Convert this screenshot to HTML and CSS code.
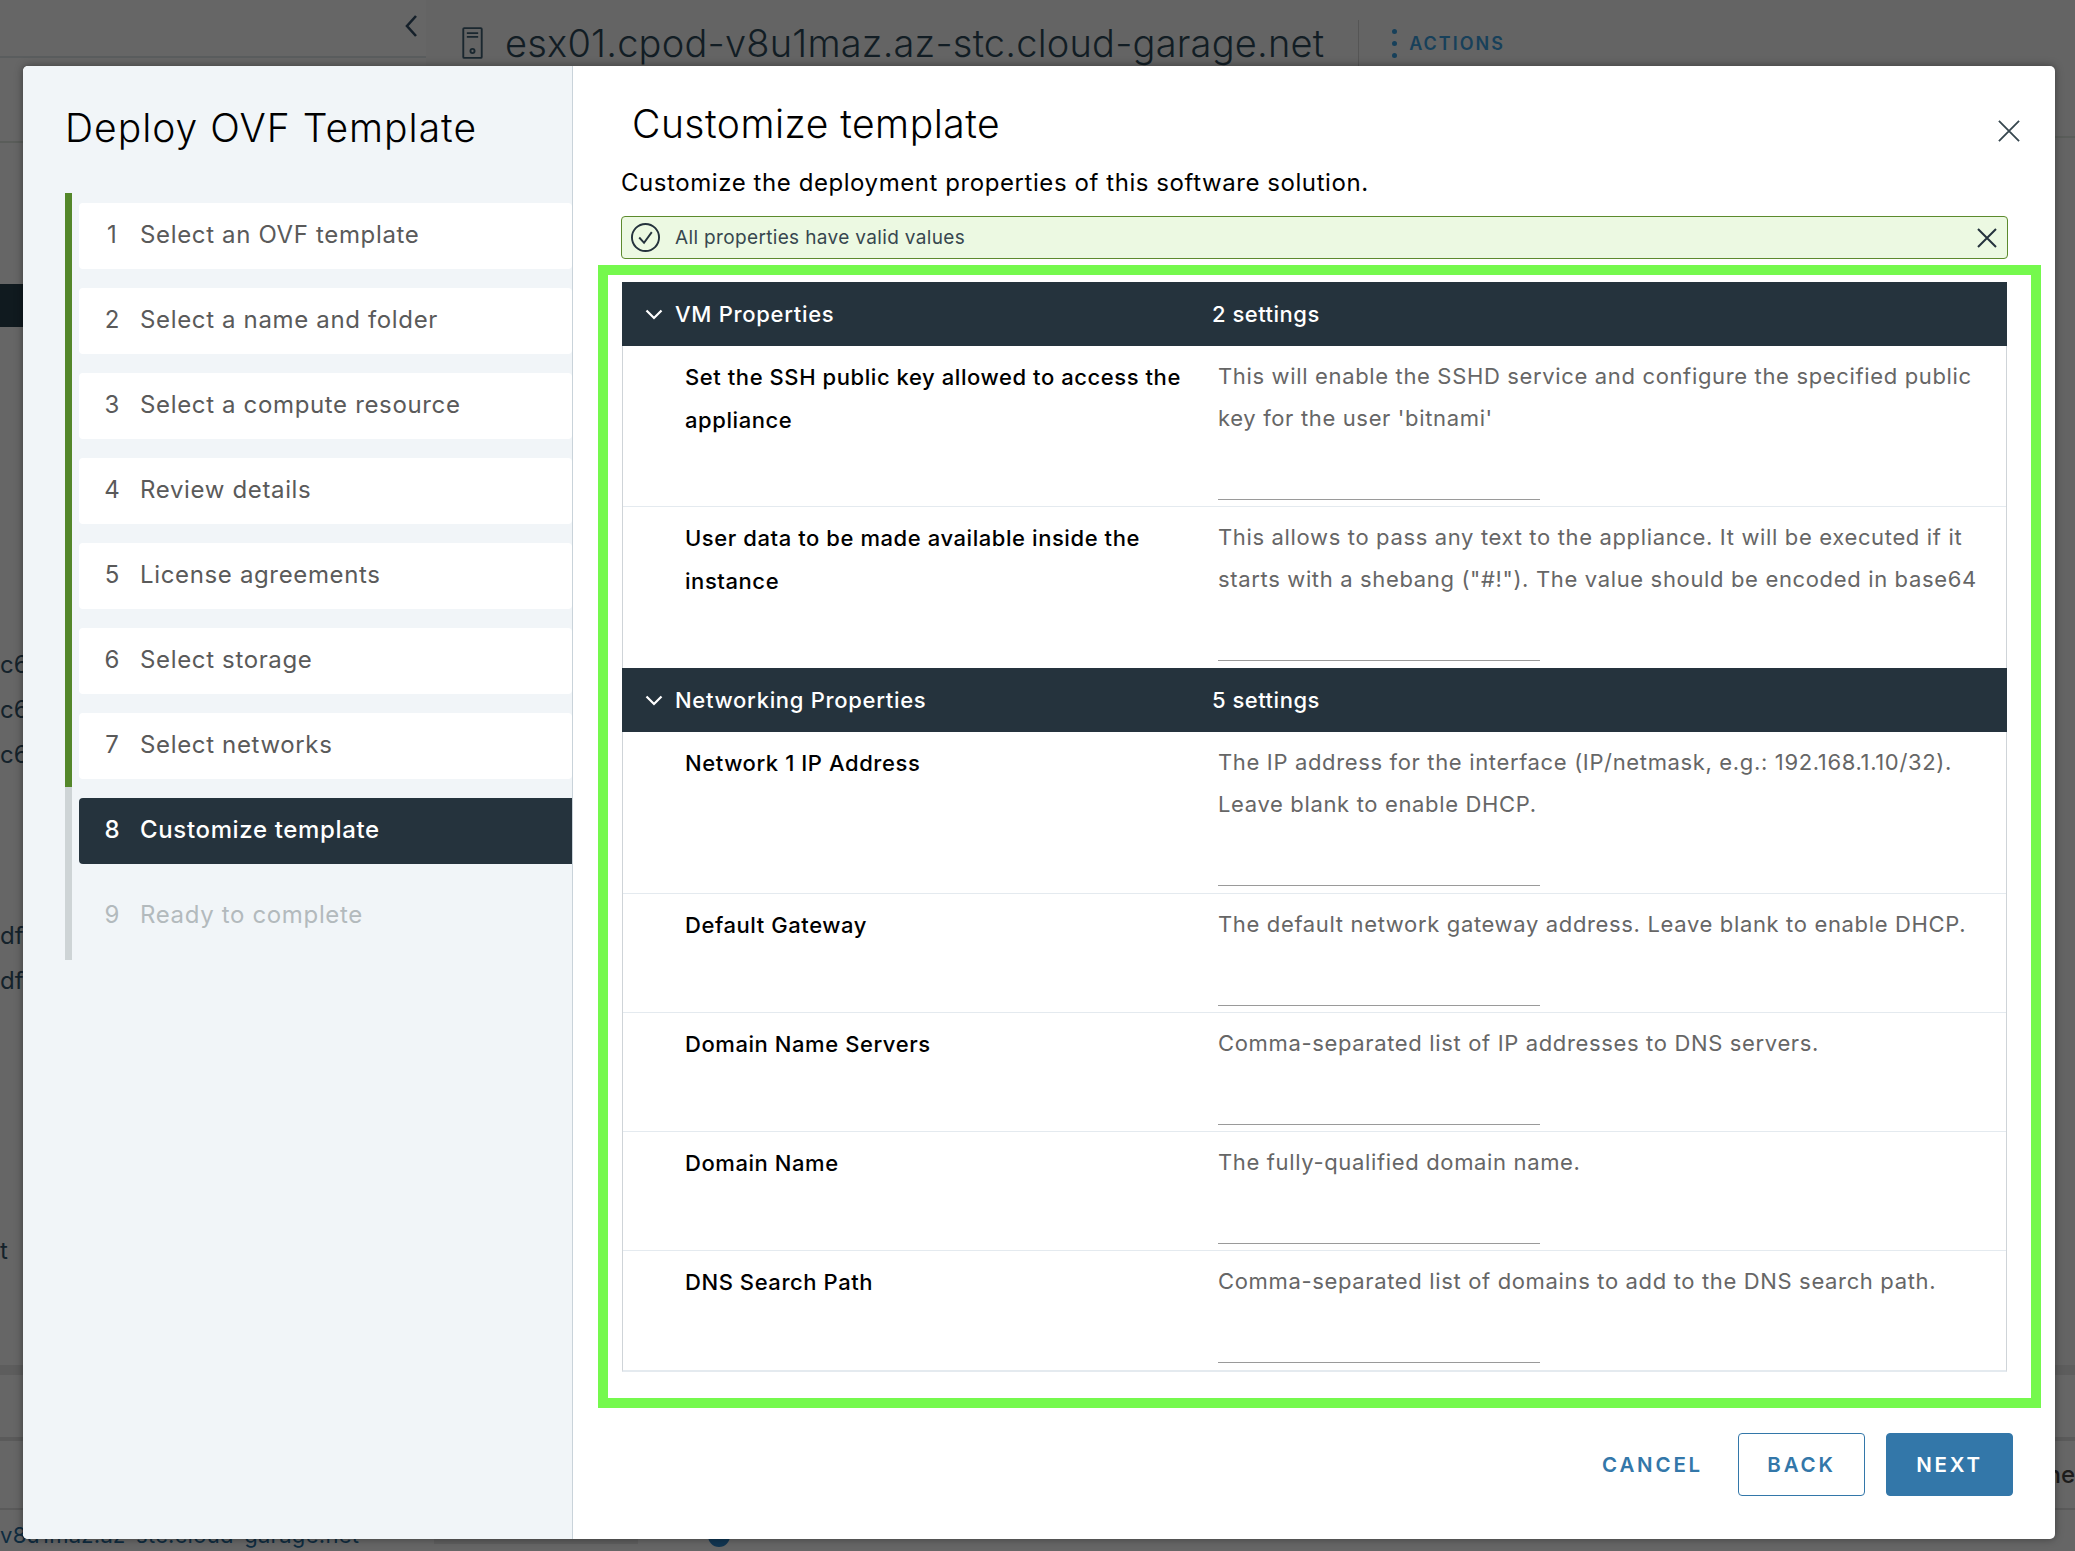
FILE: index.html
```html
<!DOCTYPE html>
<html lang="en">
<head>
<meta charset="utf-8">
<title>Deploy OVF Template</title>
<link rel="stylesheet" href="styles.css">
</head>
<body>
<div class="backdrop">
  <aside class="nav">
    <div class="nav-top">
      <svg class="nav-chevron" viewBox="0 0 16 24"><path d="M13 2 L4 12 L13 22"/></svg>
    </div>
    <div class="nav-sub"></div>
    <div class="nav-selected"></div>
    <div class="nav-list nav-list-a"><div>c6</div><div>c6</div><div>c6</div></div>
    <div class="nav-list nav-list-b"><div>df</div><div>df</div></div>
    <div class="nav-list nav-list-c"><div>t</div></div>
  </aside>
  <main class="main">
    <header class="main-head">
      <svg class="host-icon" viewBox="0 0 22 34"><rect x="1.2" y="1.2" width="19.6" height="31.6" rx="1"/><path d="M5 6.5 H17 M5 10.5 H17"/><circle cx="11" cy="25.5" r="2.2"/></svg>
      <h1 class="host-name">esx01.cpod-v8u1maz.az-stc.cloud-garage.net</h1>
      <span class="head-sep"></span>
      <span class="kebab"><i></i><i></i><i></i></span>
      <span class="actions">ACTIONS</span>
    </header>
    <div class="main-sub"></div>
  </main>
  <div class="band band-grey"></div>
  <div class="band band-line-a"><span class="band-tail">ne</span></div>
  <div class="band-foot">
    <span class="foot-link">v8u1maz.az-stc.cloud-garage.net</span>
    <span class="foot-box"></span>
    <span class="foot-dot"></span>
  </div>
</div>

<div class="modal">
  <section class="side">
    <h2 class="side-title">Deploy OVF Template</h2>
    <div class="steps">
      <div class="rail"><span class="rail-done"></span><span class="rail-todo"></span></div>
      <ol class="step-list">
        <li class="step"><span class="num">1</span>Select an OVF template</li>
        <li class="step"><span class="num">2</span>Select a name and folder</li>
        <li class="step"><span class="num">3</span>Select a compute resource</li>
        <li class="step"><span class="num">4</span>Review details</li>
        <li class="step"><span class="num">5</span>License agreements</li>
        <li class="step"><span class="num">6</span>Select storage</li>
        <li class="step"><span class="num">7</span>Select networks</li>
        <li class="step step-active"><span class="num">8</span>Customize template</li>
        <li class="step step-todo"><span class="num">9</span>Ready to complete</li>
      </ol>
    </div>
  </section>

  <section class="content">
    <div class="title-row">
      <h2 class="content-title">Customize template</h2>
      <svg class="close-icon" viewBox="0 0 24 24"><path d="M1 1 L23 23 M23 1 L1 23"/></svg>
    </div>
    <p class="lead">Customize the deployment properties of this software solution.</p>
    <div class="alert">
      <svg class="alert-icon" viewBox="0 0 30 30"><circle cx="15" cy="15" r="14"/><path d="M8.5 15 L13.5 20.5 L21.5 9.5"/></svg>
      <span class="alert-text">All properties have valid values</span>
      <svg class="alert-close" viewBox="0 0 20 20"><path d="M1 1 L19 19 M19 1 L1 19"/></svg>
    </div>
    <div class="frame">
      <div class="props">
        <div class="group-head">
          <span class="group-name"><svg class="chev" viewBox="0 0 16 10"><path d="M2 2 L8 8 L14 2"/></svg>VM Properties</span>
          <span class="group-count">2 settings</span>
        </div>
        <div class="prop">
          <div class="prop-label">Set the SSH public key allowed to access the appliance</div>
          <div class="prop-body"><p>This will enable the SSHD service and configure the specified public key for the user 'bitnami'</p><span class="field"></span></div>
        </div>
        <div class="prop prop-open">
          <div class="prop-label">User data to be made available inside the instance</div>
          <div class="prop-body"><p>This allows to pass any text to the appliance. It will be executed if it starts with a shebang ("#!"). The value should be encoded in base64</p><span class="field"></span></div>
        </div>
        <div class="group-head">
          <span class="group-name"><svg class="chev" viewBox="0 0 16 10"><path d="M2 2 L8 8 L14 2"/></svg>Networking Properties</span>
          <span class="group-count">5 settings</span>
        </div>
        <div class="prop prop-net">
          <div class="prop-label">Network 1 IP Address</div>
          <div class="prop-body"><p>The IP address for the interface (IP/netmask, e.g.: 192.168.1.10/32). Leave blank to enable DHCP.</p><span class="field"></span></div>
        </div>
        <div class="prop">
          <div class="prop-label">Default Gateway</div>
          <div class="prop-body"><p>The default network gateway address. Leave blank to enable DHCP.</p><span class="field"></span></div>
        </div>
        <div class="prop">
          <div class="prop-label">Domain Name Servers</div>
          <div class="prop-body"><p>Comma-separated list of IP addresses to DNS servers.</p><span class="field"></span></div>
        </div>
        <div class="prop">
          <div class="prop-label">Domain Name</div>
          <div class="prop-body"><p>The fully-qualified domain name.</p><span class="field"></span></div>
        </div>
        <div class="prop prop-open">
          <div class="prop-label">DNS Search Path</div>
          <div class="prop-body"><p>Comma-separated list of domains to add to the DNS search path.</p><span class="field"></span></div>
        </div>
      </div>
    </div>
    <div class="footer">
      <button class="btn btn-link">CANCEL</button>
      <button class="btn btn-outline">BACK</button>
      <button class="btn btn-solid">NEXT</button>
    </div>
  </section>
</div>
</body>
</html>
```

FILE: styles.css
```css
* { box-sizing: border-box; }
html, body { margin: 0; padding: 0; }
body {
  width: 2075px;
  height: 1551px;
  overflow: hidden;
  position: relative;
  background: #666666;
  font-family: Inter, "Liberation Sans", sans-serif;
}

/* backdrop */
.backdrop {
  height: 1551px;
  display: grid;
  grid-template-columns: 426px 1fr;
  grid-template-rows: 1365px 10px 62px 1fr;
  color: #14222b;
}
.nav { grid-row: 1; grid-column: 1; }
.nav-top {
  height: 58px;
  border-bottom: 2px solid #5a5d5e;
  display: flex;
  justify-content: flex-end;
  align-items: flex-start;
  padding: 14px 7px 0 0;
}
.nav-chevron { width: 16px; height: 24px; fill: none; stroke: #15202a; stroke-width: 2.6; }
.nav-sub { height: 85px; border-bottom: 2px solid #5a5d5a; }
.nav-selected { height: 43px; margin-top: 141px; background: #101a1f; }
.nav-list { font-size: 24px; line-height: 45px; color: #14222b; }
.nav-list-a { margin-top: 315px; }
.nav-list-b { margin-top: 136px; }
.nav-list-c { margin-top: 225px; }
.main { grid-row: 1; grid-column: 2; background: #646464; }
.main-head {
  height: 66px;
  display: flex;
  align-items: center;
  padding: 20px 0 0 36px;
}
.host-icon { width: 21px; height: 32px; fill: none; stroke: #1a272f; stroke-width: 2; margin-right: 22px; }
.host-name { margin: 0; font-size: 38px; font-weight: 300; line-height: 44px; letter-spacing: .2px; color: #121d24; }
.head-sep { width: 1px; height: 46px; background: #555; margin-left: 34px; }
.kebab { display: flex; flex-direction: column; gap: 7px; margin-left: 33px; }
.kebab i { width: 5px; height: 5px; border-radius: 50%; background: #17405a; }
.actions { margin-left: 12px; font-size: 18px; font-weight: 600; letter-spacing: 2px; color: #17405a; }
.main-sub { height: 72px; border-bottom: 2px solid #5a5d5a; }
.band { grid-column: 1 / -1; }
.band-grey { grid-row: 2; background: #5d5d5d; }
.band-line-a {
  grid-row: 3 / 4;
  border-top: 4px solid #5a5a5a;
  margin-top: 62px;
  margin-bottom: -9px;
  padding-top: 19px;
  display: flex;
  justify-content: flex-end;
}
.band-tail { font-size: 24px; line-height: 30px; font-weight: 500; color: #1c1c1c; }
.band-foot {
  grid-row: 4;
  grid-column: 1 / -1;
  border-top: 2px solid #5a5a5a;
  margin-top: 71px;
  display: flex;
  align-items: flex-start;
  padding-top: 10px;
}
.foot-link { font-size: 22px; line-height: 30px; letter-spacing: .3px; color: #0f2c40; width: 434px; white-space: nowrap; }
.foot-box { width: 204px; height: 24px; background: #5e5e5e; }
.foot-dot { width: 22px; height: 22px; margin: 5px 0 0 70px; border-radius: 50%; background: #113652; }

/* modal */
.modal {
  position: absolute;
  left: 23px;
  top: 66px;
  width: 2032px;
  height: 1473px;
  display: flex;
  background: #fff;
  border-radius: 5px;
  overflow: hidden;
  box-shadow: 0 0 8px rgba(0, 0, 0, .4);
}
.side {
  width: 550px;
  flex: none;
  background: #f1f5f8;
  border-right: 1px solid #c9d3da;
  padding: 38px 0 0 42px;
}
.side-title {
  margin: 0;
  font-size: 39px;
  line-height: 48px;
  font-weight: 300;
  letter-spacing: 1px;
  color: #000;
}
.steps { display: flex; margin-top: 41px; gap: 7px; }
.rail { width: 7px; flex: none; display: flex; flex-direction: column; }
.rail-done { height: 594px; background: #54872a; }
.rail-todo { flex: 1; background: #ced4d6; }
.step-list { list-style: none; margin: 0; padding: 10px 0 11px; flex: 1; display: flex; flex-direction: column; gap: 19px; }
.step {
  height: 66px;
  display: flex;
  align-items: center;
  padding: 0 0 4px 25px;
  background: #fff;
  border-radius: 4px;
  font-size: 24px;
  letter-spacing: .65px;
  color: #5a5a5a;
}
.num { width: 16px; text-align: center; margin-right: 20px; letter-spacing: 0; }
.step-active { background: #25333d; color: #fff; font-weight: 500; border-radius: 4px 0 0 4px; }
.step-todo { background: transparent; color: #b3babd; }

.content { flex: 1; padding: 34px 48px 0; min-width: 0; }
.title-row { display: flex; justify-content: space-between; align-items: flex-start; padding-left: 11px; }
.content-title { margin: 0; font-size: 39px; line-height: 48px; font-weight: 300; letter-spacing: .5px; color: #000; }
.close-icon { width: 22px; height: 22px; margin: 20px -13px 0 0; fill: none; stroke: #37474f; stroke-width: 2; }
.lead { margin: 17px 0 0; font-size: 24px; line-height: 36px; letter-spacing: .57px; color: #000; }
.alert {
  margin: 15px -1px 0 0;
  height: 43px;
  display: flex;
  align-items: center;
  padding: 0 9px 0 9px;
  background: #ecf9e2;
  border: 1px solid #5c8a2d;
  border-radius: 4px;
}
.alert-icon { width: 29px; height: 29px; fill: none; stroke: #25333d; stroke-width: 2; flex: none; }
.alert-text { margin: 0 0 1px 15px; font-size: 19px; letter-spacing: .35px; color: #37474f; flex: 1; }
.alert-close { width: 20px; height: 20px; margin-right: 1px; fill: none; stroke: #25333d; stroke-width: 2; }

.frame {
  margin: 6px -34px 0 -23px;
  height: 1143px;
  border: 10px solid #75f94d;
  padding: 7px 24px 0 14px;
}
.props {
  border-left: 1px solid #cfd4d8;
  border-right: 1px solid #cfd4d8;
  border-bottom: 2px solid #e4eaef;
}
.group-head {
  height: 64px;
  margin: 0 -1px;
  background: #25333d;
  color: #fff;
  font-size: 22px;
  letter-spacing: .7px;
  display: grid;
  grid-template-columns: 590px 1fr;
  align-items: center;
}
.group-name { display: flex; align-items: center; font-weight: 500; padding-left: 22px; }
.chev { width: 20px; height: 12.5px; margin-right: 11px; fill: none; stroke: #fff; stroke-width: 1.8; }
.group-count { font-weight: 500; letter-spacing: .5px; }
.prop {
  display: grid;
  grid-template-columns: 595px 1fr;
  padding: 10px 0 6px;
  border-bottom: 1px solid #e4eaef;
}
.prop-net { padding-bottom: 7px; }
.prop-open { border-bottom-color: transparent; }
.prop-label {
  padding-left: 62px;
  padding-right: 30px;
  font-size: 22px;
  line-height: 43px;
  letter-spacing: .57px;
  font-weight: 500;
  color: #000;
}
.prop-body { padding-right: 10px; }
.prop-body p { margin: -1px 0 0; font-size: 22px; line-height: 42px; letter-spacing: .65px; color: #666; }
.field { display: block; width: 322px; margin-top: 60px; border-bottom: 1px solid #9a9a9a; }

.footer { display: flex; justify-content: flex-end; align-items: center; gap: 21px; margin: 25px -6px 0 0; }
.btn {
  height: 63px;
  width: 127px;
  font-family: inherit;
  font-size: 20.5px;
  font-weight: 600;
  letter-spacing: 2.8px;
  border-radius: 4px;
  border: 1px solid #3377a9;
  background: #fff;
  color: #3377a9;
  padding: 0;
}
.btn-link { border: 0; background: transparent; width: auto; padding: 0 14px 0 0; }
.btn-solid { background: #3377a9; color: #fff; }
```
